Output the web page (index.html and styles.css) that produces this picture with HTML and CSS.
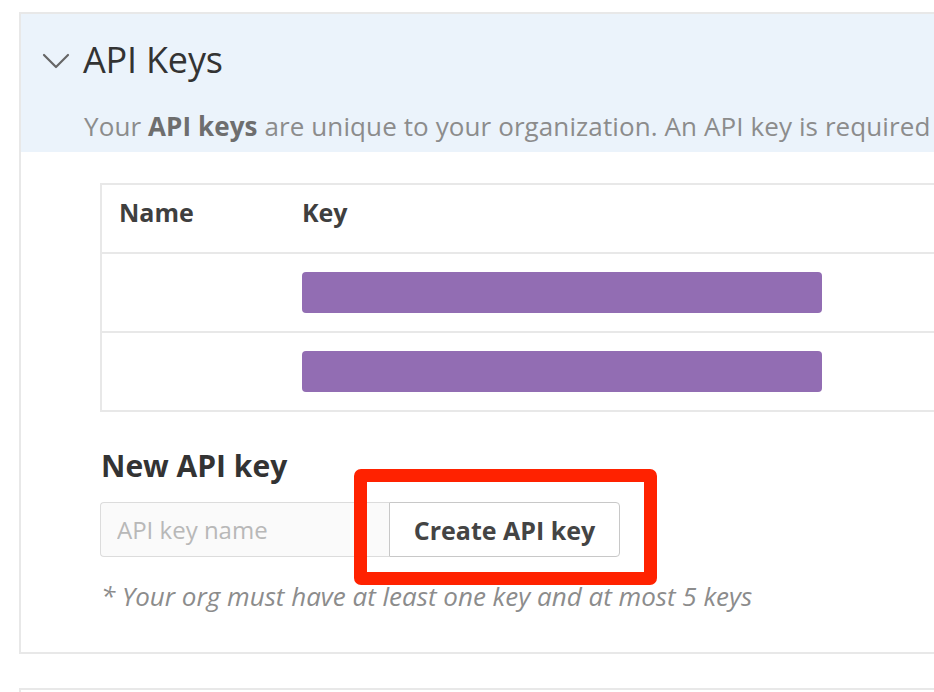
FILE: index.html
```html
<!DOCTYPE html>
<html>
<head>
<meta charset="utf-8">
<link rel="stylesheet" href="styles.css">
</head>
<body>
<div class="page">
  <section class="card">
    <div class="card-header">
      <h2 class="title">
        <svg class="chevron" width="28" height="16" viewBox="0 0 28 16"><path d="M2 2 L14 14 L26 2" fill="none" stroke="#666" stroke-width="2.2" stroke-linecap="round" stroke-linejoin="round"/></svg>
        <span>API Keys</span>
      </h2>
      <p class="desc">Your <b>API keys</b> are unique to your organization. An API key is required</p>
    </div>
    <div class="card-body">
      <div class="table">
        <div class="row head">
          <div class="c-name">Name</div>
          <div class="c-key">Key</div>
        </div>
        <div class="row">
          <div class="c-name"></div>
          <div class="c-key"><span class="redact"></span></div>
        </div>
        <div class="row">
          <div class="c-name"></div>
          <div class="c-key"><span class="redact"></span></div>
        </div>
      </div>
      <h3 class="new-title">New API key</h3>
      <div class="form">
        <input class="name-input" type="text" placeholder="API key name">
        <span class="btn-wrap">
          <button class="btn">Create API key</button>
          <span class="highlight"></span>
        </span>
      </div>
      <p class="note">* Your org must have at least one key and at most 5 keys</p>
    </div>
  </section>
  <section class="card next"></section>
</div>
</body>
</html>
```

FILE: styles.css
```css
html, body {
  margin: 0;
  padding: 0;
  background: #ffffff;
  overflow: hidden;
  font-family: "Open Sans", "Noto Sans", sans-serif;
}

.page {
  padding: 12px 0 0 19px;
  width: 1200px;
}

.card {
  border: 2px solid #e8e8e8;
  border-right: none;
  background: #fff;
}

.card-header {
  background: #ebf3fb;
  padding: 22px 0 0 21px;
  height: 116px;
  overflow: hidden;
}

.title {
  margin: 0;
  display: flex;
  align-items: center;
  font-weight: 400;
  font-size: 36px;
  line-height: 48px;
  color: #333;
  letter-spacing: -0.2px;
}

.chevron {
  margin-right: 13px;
  margin-top: 2px;
}

.desc {
  margin: 27px 0 0 42px;
  font-size: 26px;
  line-height: 30px;
  color: #8c8c8c;
  white-space: nowrap;
  letter-spacing: 0.1px;
}

.desc b {
  color: #6e6e6e;
  font-weight: 700;
}

.card-body {
  padding: 31px 0 40px 79px;
}

.table {
  border: 2px solid #e8e8e8;
  border-right: none;
  width: 1000px;
}

.row {
  display: flex;
  align-items: center;
  height: 77px;
  border-top: 2px solid #e8e8e8;
}

.row.head {
  height: 67px;
  align-items: flex-start;
  padding-top: 12px;
  box-sizing: border-box;
  border-top: none;
  font-weight: 700;
  font-size: 25px;
  line-height: 30px;
  color: #3f3f3f;
}

.c-name {
  width: 200px;
  padding-left: 17px;
  box-sizing: border-box;
}

.redact {
  display: block;
  width: 520px;
  height: 41px;
  background: #926db3;
  border-radius: 4px;
}

.new-title {
  margin: 36px 0 0 1px;
  font-size: 30px;
  line-height: 36px;
  font-weight: 700;
  color: #333;
}

.form {
  display: flex;
  margin-top: 18px;
  height: 55px;
}

.name-input {
  width: 289px;
  height: 55px;
  box-sizing: border-box;
  border: 1px solid #dcdcdc;
  border-right: none;
  border-radius: 4px 0 0 4px;
  background: #fafafa;
  font-family: "Open Sans", "Noto Sans", sans-serif;
  font-size: 24px;
  padding: 0 16px;
  color: #333;
  outline: none;
}

.name-input::placeholder {
  color: #b8b8b8;
}

.btn-wrap {
  position: relative;
  display: block;
}

.btn {
  height: 55px;
  width: 231px;
  box-sizing: border-box;
  border: 1px solid #c8c8c8;
  border-radius: 0 4px 4px 0;
  background: #fff;
  font-family: "Open Sans", "Noto Sans", sans-serif;
  font-weight: 700;
  font-size: 25px;
  color: #444;
  padding: 0;
}

.highlight {
  position: absolute;
  left: -35px;
  top: -33px;
  width: 303px;
  height: 116px;
  box-sizing: border-box;
  border: 13px solid #ff2200;
  border-radius: 7px;
  pointer-events: none;
}

.note {
  margin: 23px 0 0 1px;
  font-size: 26px;
  line-height: 32px;
  font-style: italic;
  color: #8c8c8c;
}

.card.next {
  margin-top: 34px;
  height: 60px;
}
```
